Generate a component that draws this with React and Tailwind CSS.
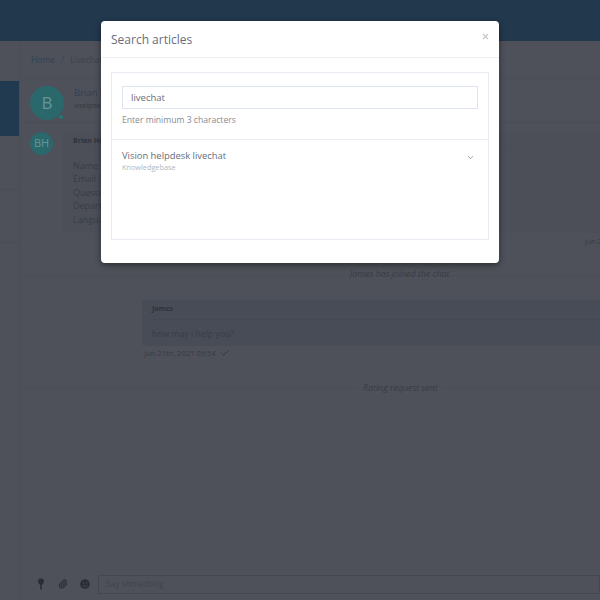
import { Check, ChevronDown, Paperclip, X } from 'lucide-react';
import { FaSmile } from 'react-icons/fa';

const visitorFields = ['Name :', 'Email :', 'Question :', 'Department :', 'Language :'];

function Avatar({ label, className }) {
  return (
    <div className={`flex shrink-0 items-center justify-center rounded-full bg-[#2a686c] text-[#659599] ${className}`}>
      {label}
    </div>
  );
}

function SearchModal() {
  return (
    <div className="absolute left-[101px] top-[21px] h-[242px] w-[398px] rounded bg-white shadow-[0_2px_6px_rgba(0,0,0,0.45)]">
      {/* Header */}
      <div className="relative flex h-[37px] items-center border-b border-[#edf0f4] px-2.5 pt-0.5">
        <h2 className="text-[12px] text-[#666e7b]">Search articles</h2>
        <button className="absolute right-[9px] top-[11px] text-[#c3c7cd]">
          <X className="h-[9px] w-[9px]" strokeWidth={3} />
        </button>
      </div>

      {/* Body */}
      <div className="mx-2.5 mt-[14px] h-[168px] border border-[#e8ebf1]">
        <div className="h-[67px] border-b border-[#e8ebf1] px-2.5 pt-[13px]">
          <div className="flex h-[23px] w-[356px] items-center border border-[#dde4ee] pl-2 pt-0.5 text-[9.5px] text-[#666e7b]">livechat</div>
          <p className="mt-[5px] text-[8.6px] leading-[12px] text-[#858b96]">Enter minimum 3 characters</p>
        </div>
        <div className="flex justify-between px-2.5 pt-[9px]">
          <div>
            <p className="text-[9.4px] leading-[13px] text-[#666e7b]">Vision helpdesk livechat</p>
            <p className="text-[7.3px] leading-[10px] text-[#b1b7c0]">Knowledgebase</p>
          </div>
          <ChevronDown className="mr-[3px] mt-[4px] h-[9px] w-[9px] text-[#7c8490]" strokeWidth={2} />
        </div>
      </div>
    </div>
  );
}

export default function App() {
  return (
    <div className="relative flex h-[600px] w-[600px] flex-col overflow-hidden bg-[#4e5159] font-['Open_Sans',sans-serif]">
      <header className="h-[41px] shrink-0 bg-[#22384d]" />

      <div className="flex min-h-0 flex-1">
        {/* Sidebar */}
        <aside className="w-[20px] shrink-0 border-r border-[#4a4d55] pt-[40px]">
          <div className="h-[55px] bg-[#223a50]" />
          <div className="mt-[53px] h-[54px] border-t border-b border-[#4a4d55]" />
        </aside>

        <main className="min-w-0 flex-1">
          {/* Breadcrumb */}
          <div className="flex h-[38px] items-center gap-[6px] border-b border-[#4a4d55] pl-[11px] pt-[2px] text-[8.5px] text-[#2f4256]">
            <span>Home</span>
            <span className="text-[#3d424c]">/</span>
            <span className="text-[#3d424c]">Livechat</span>
          </div>

          {/* Visitor */}
          <div className="flex h-[44px] items-start gap-[10px] border-b border-[#4a4d55] pl-[11px] pt-[7px]">
            <div className="relative -ml-px">
              <Avatar label="B" className="h-[34px] w-[34px] text-[17px]" />
              <span className="absolute bottom-0 right-0 h-[6px] w-[6px] rounded-full border border-[#4e5159] bg-[#1f7a74]" />
            </div>
            <div className="-mt-px">
              <p className="text-[9.5px] leading-[15px] text-[#2f4256]">Brian Hall</p>
              <p className="text-[7px] leading-[12px] text-[#343842]">viselpdesk</p>
            </div>
          </div>

          {/* First message */}
          <div className="flex gap-[10px] pl-[10px] pt-[9px]">
            <Avatar label="BH" className="h-[23px] w-[23px] text-[11px]" />
            <div className="h-[101px] w-full bg-[#4c4f58] pl-[10px]">
              <p className="flex h-[20px] items-center border-b border-[#4a4d55] text-[7px] font-bold text-[#2f333b]">Brian Hall</p>
              <div className="pt-[7px] text-[9px] leading-[13.4px] text-[#383c46]">
                {visitorFields.map((field) => (
                  <p key={field}>{field}</p>
                ))}
              </div>
            </div>
          </div>
          <p className="mt-[4px] pl-[565px] text-[7px] leading-[10px] whitespace-nowrap text-[#383c46]">Jun-21th, 2021 09:53</p>

          {/* Joined */}
          <div className="relative mt-[28px] h-px bg-[#4a4d55]">
            <span className="absolute left-[330px] top-[-7px] text-[8.8px] italic leading-[12px] whitespace-nowrap text-[#383c46]">James has joined the chat</span>
          </div>

          {/* Agent reply */}
          <div className="ml-[122px] mt-[24px] h-[46px] rounded-l-[3px] bg-[#474c57] pl-[10px]">
            <p className="flex h-[20px] items-center border-b border-[#444954] text-[7px] font-bold text-[#2f333b]">James</p>
            <p className="pt-[8px] text-[8.7px] leading-[12px] text-[#383c46]">how may i help you?</p>
          </div>
          <p className="ml-[124px] mt-[2px] flex items-center gap-[2px] text-[7.5px] leading-[10px] text-[#383c46]">
            Jun-21th, 2021 09:54
            <Check className="ml-0.5 h-[10px] w-[10px] text-[#2f333b]" strokeWidth={2} />
          </p>

          {/* Rating */}
          <div className="relative mt-[30px] h-px bg-[#4a4d55]">
            <span className="absolute left-[339px] top-[-6px] bg-[#4e5159] px-1 text-[8.8px] italic leading-[12px] whitespace-nowrap text-[#383c46]">Rating request sent</span>
          </div>
        </main>
      </div>

      {/* Composer */}
      <div className="absolute bottom-[6px] left-[20px] right-0 flex h-[20px] items-center pl-[16px]">
        <svg viewBox="0 0 10 12" className="h-[12px] w-[10px] fill-[#2a2e36]">
          <path d="M5 0.5a3 3 0 0 1 3 3c0 1.6-1.2 2.800-2.200 3.400V11.500H4.200V6.900C3.200 6.300 2 5.100 2 3.500a3 3 0 0 1 3-3z" />
        </svg>
        <Paperclip className="ml-[12px] h-[10px] w-[10px] text-[#2a2e36]" strokeWidth={2.5} />
        <FaSmile className="ml-[12px] h-[10px] w-[10px] text-[#2a2e36]" />
        <div className="ml-[8px] flex h-[19px] flex-1 items-center border border-[#43474f] pl-[7px] text-[8.5px] text-[#40444d]">Say something</div>
      </div>

      <SearchModal />
    </div>
  );
}
